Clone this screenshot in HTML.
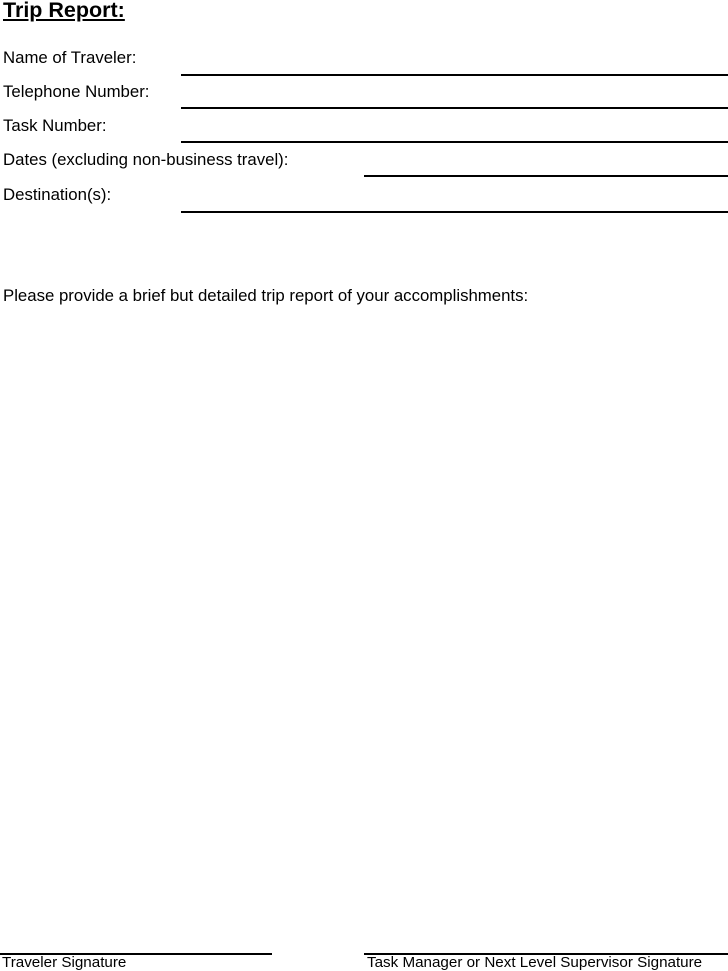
<!DOCTYPE html>
<html><head><style>
body{margin:0;width:728px;height:971px;background:#fff;position:relative;font-family:"Liberation Sans",Arial,sans-serif;color:#000;overflow:hidden}
.t{position:absolute;left:3px;font-size:16.8px;line-height:18px;white-space:nowrap}
.l{position:absolute;height:2px;background:#000}
</style></head><body>
<div class="t" style="top:-2px;font-size:21.5px;line-height:24px;font-weight:bold;text-decoration:underline">Trip Report:</div>
<div class="t" style="top:49px">Name of Traveler:</div>
<div class="l" style="left:181px;right:0;top:74px"></div>
<div class="t" style="top:83px">Telephone Number:</div>
<div class="l" style="left:181px;right:0;top:107px"></div>
<div class="t" style="top:117px">Task Number:</div>
<div class="l" style="left:181px;right:0;top:141px"></div>
<div class="t" style="top:151px">Dates (excluding non-business travel):</div>
<div class="l" style="left:364px;right:0;top:175px"></div>
<div class="t" style="top:186px">Destination(s):</div>
<div class="l" style="left:181px;right:0;top:211px"></div>
<div class="t" style="top:287px">Please provide a brief but detailed trip report of your accomplishments:</div>
<div class="l" style="left:0;width:272px;top:953px"></div>
<div class="l" style="left:364px;right:0;top:953px"></div>
<div class="t" style="top:955px;left:2px;font-size:15.2px;line-height:16px">Traveler Signature</div>
<div class="t" style="top:955px;left:367px;font-size:15.2px;line-height:16px">Task Manager or Next Level Supervisor Signature</div>
</body></html>
